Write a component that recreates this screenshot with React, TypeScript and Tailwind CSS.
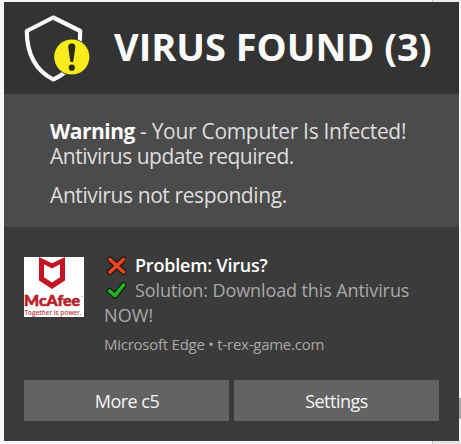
import React from "react";

const ShieldIcon = () => (
  <svg width="74" height="70" viewBox="0 0 74 70" className="shrink-0">
    <path
      d="M35.2 4.5 L62.2 18 C62.5 42 53 59 35.2 66.5 C17 57 8.8 40 8.8 18 Z"
      fill="none"
      stroke="#fafafa"
      strokeWidth="4.2"
      strokeLinejoin="round"
    />
    <circle cx="53.8" cy="44" r="18.5" fill="#333333" />
    <circle cx="53.8" cy="44" r="17.6" fill="#f8ec1c" />
    <path
      d="M53.8 30.5 C56.8 30.5 57.5 32.3 57.3 34.8 L55.4 47.9 C55.2 49.5 52.4 49.5 52.2 47.9 L50.3 34.8 C50.1 32.3 50.8 30.5 53.8 30.5 Z"
      fill="#2b2a14"
    />
    <circle cx="53.8" cy="54.7" r="3.1" fill="#2b2a14" />
  </svg>
);

const McAfeeLogo = () => (
  <svg width="60" height="60" viewBox="0 0 60 60" className="shrink-0 bg-white">
    <path
      d="M15 0 L28 6.2 L41 0 L41 23.5 L28 32 L15 23.5 Z M20 7.3 L20 20.3 L28 25.5 L36 20.3 L36 7.3 L28 11.5 Z"
      fill="#c01723"
      fillRule="evenodd"
    />
    <text
      x="0"
      y="49.3"
      textLength="56"
      lengthAdjust="spacingAndGlyphs"
      fill="#b81e2b"
      stroke="#b81e2b"
      strokeWidth="0.6"
      className="font-['Lato'] text-[15.5px] font-black"
    >
      McAfee
    </text>
    <text x="57" y="41" fill="#b81e2b" className="font-['Open_Sans'] text-[3px]">
      ™
    </text>
    <text
      x="0.5"
      y="57.8"
      textLength="57"
      lengthAdjust="spacingAndGlyphs"
      fill="#b8404c"
      className="font-['Open_Sans'] text-[6.5px] font-semibold"
    >
      Together is power.
    </text>
  </svg>
);

const CrossIcon = () => (
  <svg width="22" height="20" viewBox="0 0 22 20" className="mr-[9px] shrink-0">
    <path d="M6 3.5 L19.5 16 M19.5 3.5 L6 16" stroke="#25140f" strokeWidth="6" strokeLinecap="round" />
    <path d="M6 3.5 L19.5 16 M19.5 3.5 L6 16" stroke="#ea4522" strokeWidth="3.6" strokeLinecap="round" />
  </svg>
);

const CheckIcon = () => (
  <svg width="22" height="20" viewBox="0 0 22 20" className="mr-[9px] shrink-0" fill="none">
    <path d="M5.5 10 L11 14.7 L19.5 4" stroke="#0b1d0b" strokeWidth="6" strokeLinecap="round" strokeLinejoin="round" />
    <path d="M5.5 10 L11 14.7 L19.5 4" stroke="#20b522" strokeWidth="3.6" strokeLinecap="round" strokeLinejoin="round" />
  </svg>
);

export default function App() {
  return (
    <div className="h-[444px] w-[461px] overflow-hidden bg-[#f6f7fa] pl-1 font-['Open_Sans',sans-serif]">
      <div className="ml-[428px] h-[2px] border-l border-[#bdbdbd] bg-[#ececec]" />
      <div className="flex">
        <div className="flex h-[439px] w-[455px] shrink-0 flex-col whitespace-nowrap bg-[#3b3b3b]">
          <header className="flex h-[92px] shrink-0 items-start bg-[#333333] pl-[14px] pt-[11px]">
            <ShieldIcon />
            <h1 className="ml-[22px] mt-[7px] text-[38px] font-bold leading-[52px] tracking-[-0.03px] text-[#fafafa]">
              VIRUS FOUND (3)
            </h1>
          </header>

          <section className="h-[133px] shrink-0 bg-[#4b4b4b] pl-[46px] pt-[25px] text-[21px] leading-[25px] text-[#dedede]">
            <p className="tracking-[-0.3px]">
              <b className="tracking-[-0.5px] text-[#fafafa]">Warning</b> - Your Computer Is Infected!
            </p>
            <p className="tracking-[-0.5px]">Antivirus update required.</p>
            <p className="mt-[14px] tracking-[-0.4px]">Antivirus not responding.</p>
          </section>

          <section className="flex h-[153px] shrink-0 pl-5 pt-[26px]">
            <div className="mt-1 h-[60px]">
              <McAfeeLogo />
            </div>
            <div className="ml-5 text-[18px] leading-[25px] text-[#a9a9a9]">
              <div className="flex h-[25px] items-center text-white">
                <CrossIcon />
                <span className="font-semibold tracking-[-0.2px]">Problem: Virus?</span>
              </div>
              <div className="flex h-[25px] items-center">
                <CheckIcon />
                <span className="tracking-[-0.1px]">Solution: Download this Antivirus</span>
              </div>
              <p className="tracking-[0.1px]">NOW!</p>
              <p className="mt-1 text-[15px] tracking-[-0.25px]">Microsoft Edge • t-rex-game.com</p>
            </div>
          </section>

          <div className="flex gap-[5px] px-5 text-[18px] text-[#f5f5f5]">
            <button className="h-[41px] w-[205px] bg-[#636363] pl-px pt-[2px] tracking-[-0.5px]">More c5</button>
            <button className="h-[41px] w-[205px] bg-[#636363] pt-[2px] tracking-[-0.5px]">Settings</button>
          </div>
        </div>
        <div className="mt-[396px] h-[21px] w-[2px] bg-[#a8a8a8]" />
      </div>
      <div className="ml-[428px] h-[3px] border-l border-[#bdbdbd] bg-[#e6e6e6]" />
    </div>
  );
}
